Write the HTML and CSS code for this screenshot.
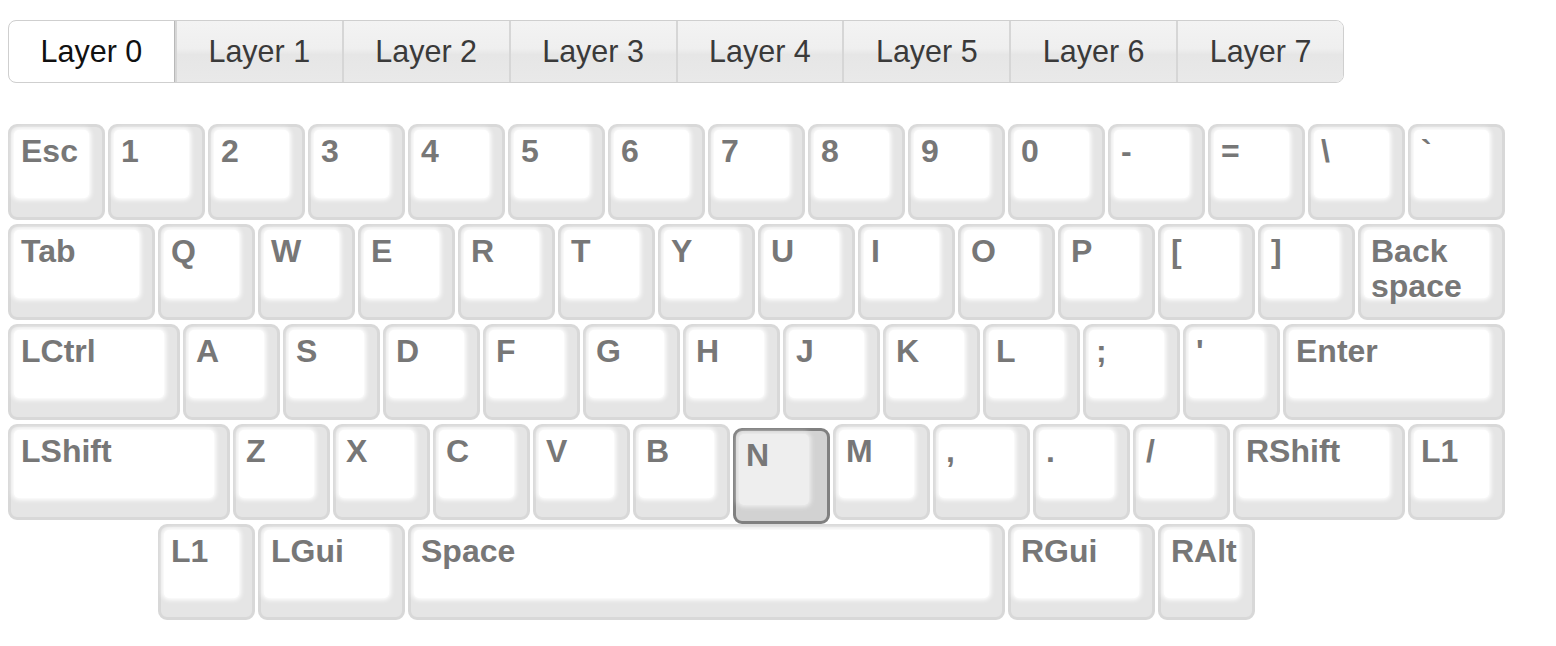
FILE: index.html
```html
<!DOCTYPE html>
<html>
<head>
<meta charset="utf-8">
<link rel="stylesheet" href="styles.css">
</head>
<body>
<div class="tabs">
  <div class="tab active">Layer 0</div>
  <div class="tab">Layer 1</div>
  <div class="tab">Layer 2</div>
  <div class="tab">Layer 3</div>
  <div class="tab">Layer 4</div>
  <div class="tab">Layer 5</div>
  <div class="tab">Layer 6</div>
  <div class="tab">Layer 7</div>
</div>
<div class="keyboard">
  <div class="row">
    <div class="key"><div class="top">Esc</div></div>
    <div class="key"><div class="top">1</div></div>
    <div class="key"><div class="top">2</div></div>
    <div class="key"><div class="top">3</div></div>
    <div class="key"><div class="top">4</div></div>
    <div class="key"><div class="top">5</div></div>
    <div class="key"><div class="top">6</div></div>
    <div class="key"><div class="top">7</div></div>
    <div class="key"><div class="top">8</div></div>
    <div class="key"><div class="top">9</div></div>
    <div class="key"><div class="top">0</div></div>
    <div class="key"><div class="top">-</div></div>
    <div class="key"><div class="top">=</div></div>
    <div class="key"><div class="top">\</div></div>
    <div class="key"><div class="top">`</div></div>
  </div>
  <div class="row">
    <div class="key u15"><div class="top">Tab</div></div>
    <div class="key"><div class="top">Q</div></div>
    <div class="key"><div class="top">W</div></div>
    <div class="key"><div class="top">E</div></div>
    <div class="key"><div class="top">R</div></div>
    <div class="key"><div class="top">T</div></div>
    <div class="key"><div class="top">Y</div></div>
    <div class="key"><div class="top">U</div></div>
    <div class="key"><div class="top">I</div></div>
    <div class="key"><div class="top">O</div></div>
    <div class="key"><div class="top">P</div></div>
    <div class="key"><div class="top">[</div></div>
    <div class="key"><div class="top">]</div></div>
    <div class="key u15"><div class="top">Back<br>space</div></div>
  </div>
  <div class="row">
    <div class="key u175"><div class="top">LCtrl</div></div>
    <div class="key"><div class="top">A</div></div>
    <div class="key"><div class="top">S</div></div>
    <div class="key"><div class="top">D</div></div>
    <div class="key"><div class="top">F</div></div>
    <div class="key"><div class="top">G</div></div>
    <div class="key"><div class="top">H</div></div>
    <div class="key"><div class="top">J</div></div>
    <div class="key"><div class="top">K</div></div>
    <div class="key"><div class="top">L</div></div>
    <div class="key"><div class="top">;</div></div>
    <div class="key"><div class="top">'</div></div>
    <div class="key u225"><div class="top">Enter</div></div>
  </div>
  <div class="row">
    <div class="key u225"><div class="top">LShift</div></div>
    <div class="key"><div class="top">Z</div></div>
    <div class="key"><div class="top">X</div></div>
    <div class="key"><div class="top">C</div></div>
    <div class="key"><div class="top">V</div></div>
    <div class="key"><div class="top">B</div></div>
    <div class="key pressed"><div class="top">N</div></div>
    <div class="key"><div class="top">M</div></div>
    <div class="key"><div class="top">,</div></div>
    <div class="key"><div class="top">.</div></div>
    <div class="key"><div class="top">/</div></div>
    <div class="key u175"><div class="top">RShift</div></div>
    <div class="key"><div class="top">L1</div></div>
  </div>
  <div class="row offset">
    <div class="key"><div class="top">L1</div></div>
    <div class="key u15"><div class="top">LGui</div></div>
    <div class="key u6"><div class="top">Space</div></div>
    <div class="key u15"><div class="top">RGui</div></div>
    <div class="key"><div class="top">RAlt</div></div>
  </div>
</div>
</body>
</html>
```
FILE: styles.css
```css
body {
  margin: 8px;
  background: #fff;
  font-family: "Liberation Sans", Arial, Helvetica, sans-serif;
}

.tabs {
  display: flex;
  box-sizing: border-box;
  width: 1336px;
  height: 63px;
  margin-top: 12px;
  border: 1px solid #cfcfcf;
  border-radius: 8px;
  overflow: hidden;
}

.tab {
  flex: 1;
  display: flex;
  align-items: center;
  justify-content: center;
  font-size: 30.5px;
  color: #3a3a3a;
  background: linear-gradient(#f3f3f3 0%, #efefef 45%, #e6e6e6 55%, #e9e9e9 100%);
  border-left: 2px solid #d6d6d6;
}

.tab:first-child {
  border-left: none;
}

.tab.active {
  background: #fff;
  color: #111;
  border: 1px solid #b8b8b8;
  border-radius: 8px 0 0 8px;
  margin: -1px 0 -1px -1px;
}

.keyboard {
  display: flex;
  flex-direction: column;
  gap: 4px;
  margin-top: 41px;
}

.row {
  display: flex;
  gap: 4px;
}

.row.offset {
  padding-left: 150px;
}

.key {
  box-sizing: border-box;
  flex: none;
  width: 97px;
  height: 96px;
  margin-right: -1px;
  border: 3px solid #d8d8d8;
  border-radius: 9px;
  background: #e5e5e5;
  padding: 3px 13px 19px 3px;
}

.u15 { width: 147px; }
.u175 { width: 172px; }
.u225 { width: 222px; }
.u6 { width: 597px; }

.top {
  box-sizing: border-box;
  height: 100%;
  background: #fff;
  border-radius: 5px;
  box-shadow: 0 0 4px 2px #fff;
  padding: 4px 0 0 7px;
  font-size: 32px;
  font-weight: bold;
  line-height: 35px;
  color: #777;
}

.key.pressed {
  border-color: #808080;
  background: #d2d2d2;
  padding: 3px 18px 16px 3px;
  transform: translateY(4px);
}

.key.pressed .top {
  background: #eee;
  box-shadow: 0 0 4px 2px #eee;
}
```
